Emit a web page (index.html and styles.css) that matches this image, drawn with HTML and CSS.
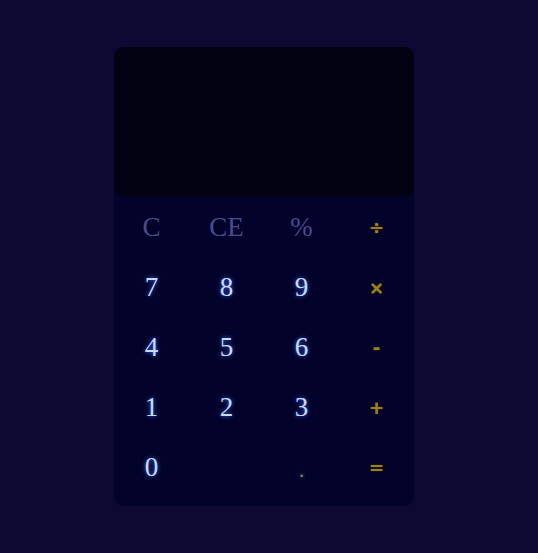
FILE: index.html
```html
<!DOCTYPE html>
<html>
<head>
<meta charset="utf-8">
<link rel="stylesheet" href="styles.css">
</head>
<body>
<div class="calc">
  <div class="display"></div>
  <div class="keys">
    <button class="key fn">C</button>
    <button class="key fn">CE</button>
    <button class="key fn">%</button>
    <button class="key op">÷</button>
    <button class="key num">7</button>
    <button class="key num">8</button>
    <button class="key num">9</button>
    <button class="key op">×</button>
    <button class="key num">4</button>
    <button class="key num">5</button>
    <button class="key num">6</button>
    <button class="key op">-</button>
    <button class="key num">1</button>
    <button class="key num">2</button>
    <button class="key num">3</button>
    <button class="key op">+</button>
    <button class="key num">0</button>
    <button class="key num"></button>
    <button class="key dot">.</button>
    <button class="key op">=</button>
  </div>
</div>
</body>
</html>
```
FILE: styles.css
```css
html, body {
  margin: 0;
  padding: 0;
  background: #0e0933;
  height: 100%;
}
body {
  padding: 47px 0 0 114px;
  box-sizing: border-box;
}
.calc {
  width: 300px;
  height: 459px;
  background: #03022a;
  border-radius: 10px;
  display: flex;
  flex-direction: column;
}
.display {
  height: 150px;
  background: #020213;
  border-radius: 10px;
}
.keys {
  display: grid;
  grid-template-columns: repeat(4, 75px);
  grid-auto-rows: 60px;
}
.key {
  background: none;
  border: none;
  padding: 1px 0 0;
  font-family: "Liberation Serif", serif;
  font-size: 27px;
  display: flex;
  align-items: center;
  justify-content: center;
}
.num {
  color: #cbd9ff;
  text-shadow: 0 0 4px #3a6cff;
}
.fn {
  color: #4b4b8c;
}
.op {
  color: #9c8210;
  font-family: "DejaVu Sans", sans-serif;
  font-weight: bold;
  font-size: 18px;
  text-shadow: 0 0 1px #9c8210;
}
.dot {
  color: #9c8210;
  font-family: "DejaVu Sans", sans-serif;
  font-weight: bold;
  font-size: 12px;
  padding-top: 12px;
  text-shadow: 0 0 4px #3a6cff;
}
```
